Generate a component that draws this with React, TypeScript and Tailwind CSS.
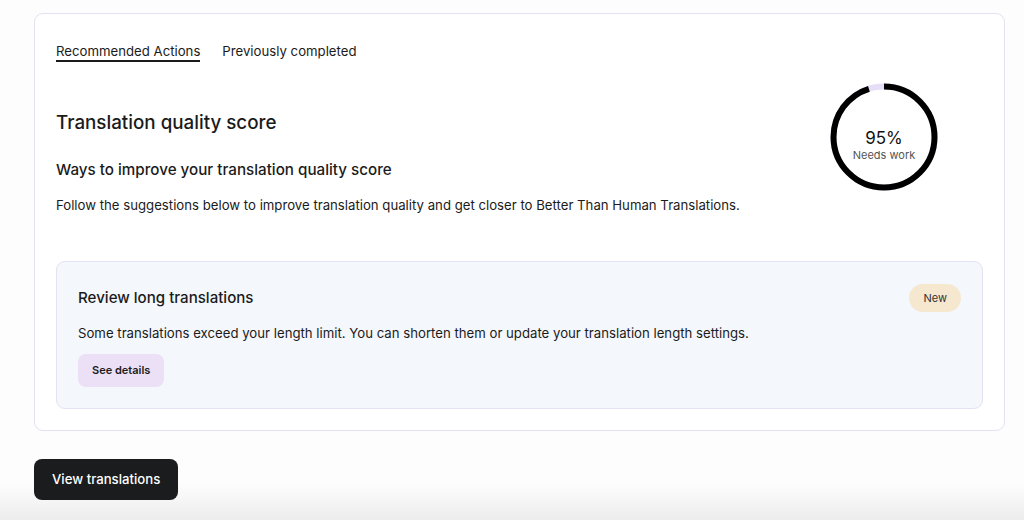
import React from "react";

const FONT = "font-['Inter','Noto_Sans',sans-serif]";

function ScoreRing({ value, label }: { value: number; label: string }) {
  const r = 50.5;
  const c = 2 * Math.PI * r;
  return (
    <div className="relative w-[108px] h-[108px]">
      <svg width="108" height="108" viewBox="0 0 108 108" className="-rotate-90">
        <circle cx="54" cy="54" r={r} fill="none" stroke="#e6ddf6" strokeWidth="6" />
        <circle
          cx="54"
          cy="54"
          r={r}
          fill="none"
          stroke="#000"
          strokeWidth="6"
          strokeDasharray={`${(c * value) / 100} ${c}`}
        />
      </svg>
      <div className="absolute inset-0 flex flex-col items-center justify-center pt-[19px]">
        <div className="text-[17px] leading-none text-[#111]">{value}%</div>
        <div className="text-[11px] text-[#555]">{label}</div>
      </div>
    </div>
  );
}

export default function App() {
  return (
    <div className={`${FONT} w-[1024px] h-[520px] bg-[#fdfdfe] text-[#1b1b1b] relative overflow-hidden`}>
      <div className="absolute left-0 right-0 bottom-0 h-[36px] bg-gradient-to-b from-transparent to-[#ececec] pointer-events-none" />

      <div className="relative pt-[13px] pl-[34px] pr-[19px]">
        <div className="border border-[#e4e1f3] rounded-[9px] bg-white px-[21px] pt-[28px] pb-[21px]">
          <div className="flex gap-[22px] text-[13.2px] leading-[18px]">
            <div className="border-b-2 border-[#1b1b1b]">Recommended Actions</div>
            <div>Previously completed</div>
          </div>

          <div className="flex justify-between">
            <div>
              <h1 className="text-[18.8px] font-medium mt-[47px]">Translation quality score</h1>
              <h2 className="text-[15.2px] font-medium mt-[22px]">Ways to improve your translation quality score</h2>
              <p className="text-[13.2px] mt-[14px]">
                Follow the suggestions below to improve translation quality and get closer to Better Than Human Translations.
              </p>
            </div>
            <div className="mt-[21px] mr-[45px]">
              <ScoreRing value={95} label="Needs work" />
            </div>
          </div>

          <div className="mt-[45px] bg-[#f4f7fb] border border-[#e4e1f3] rounded-[9px] px-[21px] pt-[22px] pb-[21px]">
            <div className="flex justify-between items-center">
              <div className="text-[15.1px] font-medium">Review long translations</div>
              <span className="bg-[#f5e8cf] rounded-full px-[14px] py-[6px] text-[11px] text-[#333]">New</span>
            </div>
            <p className="text-[13.2px] mt-[12px]">
              Some translations exceed your length limit. You can shorten them or update your translation length settings.
            </p>
            <button className="mt-[10px] bg-[#ebe0f6] rounded-[8px] px-[14px] py-[8px] text-[11px] font-semibold">
              See details
            </button>
          </div>
        </div>
      </div>

      <div className="relative pl-[34px] mt-[28px]">
        <button className="bg-[#1a1c1d] text-white rounded-[8px] px-[18px] py-[11px] text-[13.2px] font-medium">
          View translations
        </button>
      </div>
    </div>
  );
}
